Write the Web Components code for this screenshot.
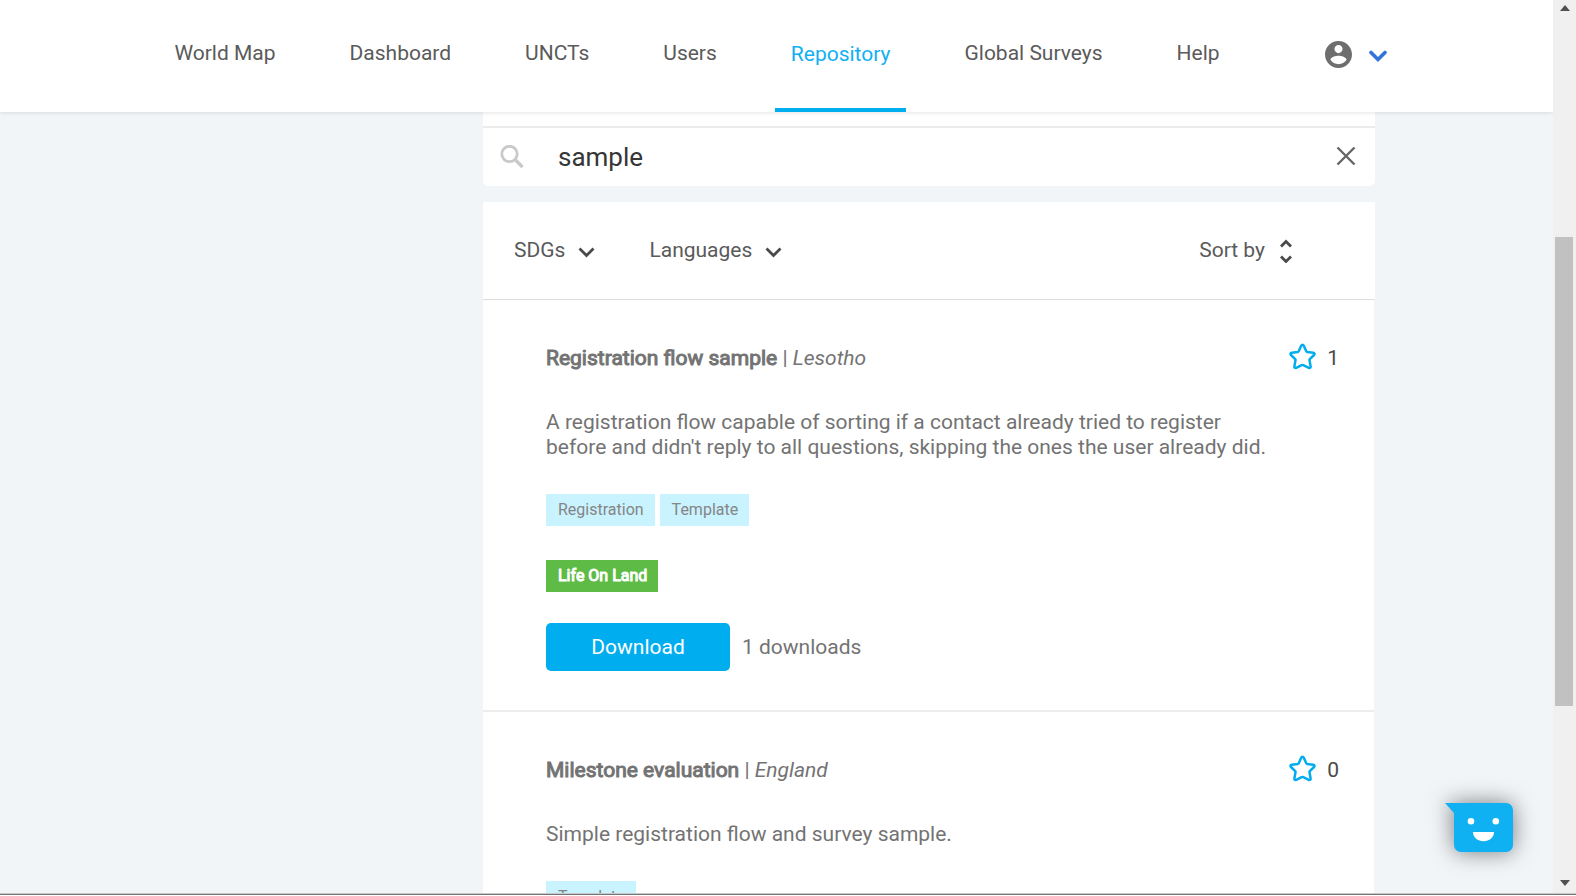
<!DOCTYPE html>
<html lang="en">
<head>
<meta charset="utf-8">
<title>Repository</title>
<style>
  html, body { margin: 0; height: 100%; }
  body { font-family: Roboto, "Liberation Sans", sans-serif; font-size: 21px; line-height: 25px; color: #737373; background: #fff; overflow: hidden; }
</style>
</head>
<body>
<repo-app></repo-app>
<script>
const define = (name, html) => {
  const t = document.createElement('template');
  t.innerHTML = html;
  customElements.define(name, class extends HTMLElement {
    constructor() {
      super();
      this.attachShadow({ mode: 'open' }).append(t.content.cloneNode(true));
    }
  });
};

define('nav-item', `
<style>
  :host { display: flex; }
  a { display: flex; align-items: center; box-sizing: border-box; padding: 0 16px 6px; color: #5a5a5a; text-decoration: none; }
  :host([active]) a { color: #11b0f2; padding-top: 6px; border-bottom: 4px solid #00adef; }
</style>
<a href="#"><slot></slot></a>`);

define('site-header', `
<style>
  :host { display: block; flex: none; background: #fff; box-shadow: 0 1px 4px rgba(0,0,0,.1); position: relative; z-index: 1; }
  nav { display: flex; justify-content: center; gap: 42px; height: 112px; }
  button { display: flex; align-items: center; gap: 17px; margin-left: 47px; padding: 0 8px 4px 0; border: 0; background: none; }
  svg { display: block; }
</style>
<nav>
  <nav-item>World Map</nav-item>
  <nav-item>Dashboard</nav-item>
  <nav-item>UNCTs</nav-item>
  <nav-item>Users</nav-item>
  <nav-item active>Repository</nav-item>
  <nav-item>Global Surveys</nav-item>
  <nav-item>Help</nav-item>
  <button type="button" aria-label="Account">
    <svg width="27" height="27" viewBox="2 2 20 20"><path fill="#6e6e6e" d="M12 2C6.48 2 2 6.48 2 12s4.48 10 10 10 10-4.48 10-10S17.52 2 12 2zm0 3c1.66 0 3 1.34 3 3s-1.34 3-3 3-3-1.34-3-3 1.34-3 3-3zm0 14.200c-2.500 0-4.710-1.280-6-3.220.03-1.990 4-3.080 6-3.080 1.990 0 5.970 1.090 6 3.080-1.290 1.940-3.500 3.220-6 3.220z"/></svg>
    <svg width="18" height="18" viewBox="0 0 18 18"><path d="M2 7.500l7 7 7-7" fill="none" stroke="#3273dc" stroke-width="3.600" stroke-linecap="round"/></svg>
  </button>
</nav>`);

define('search-box', `
<style>
  :host { display: block; background: #fff; border-radius: 0 0 5px 5px; padding-top: 14px; }
  form { display: flex; align-items: center; gap: 33px; height: 58px; padding: 0 19px 0 17px; border-top: 2px solid #ebebeb; }
  input { flex: 1; min-width: 0; border: 0; padding: 0; outline: 0; background: none; font: inherit; font-size: 26px; line-height: 32px; color: #363636; }
  button { border: 0; padding: 0; background: none; }
  svg { display: block; }
</style>
<form>
  <svg width="25" height="25" viewBox="0 0 25 25" fill="none" stroke="#c9c9c9"><circle cx="9.500" cy="9" r="7.700" stroke-width="2.800"/><path d="M15 14.500l7.500 7.500" stroke-width="3.400"/></svg>
  <input type="text" value="sample" aria-label="Search">
  <button type="button" aria-label="Clear"><svg width="20" height="24" viewBox="0 0 20 24"><path d="M1.500 2.500l17 17M18.500 2.500l-17 17" fill="none" stroke="#666" stroke-width="2.400"/></svg></button>
</form>`);

define('filter-bar', `
<style>
  :host { display: flex; align-items: center; height: 97px; padding: 0 82px 0 31px; background: #fff; border-bottom: 1px solid #dedede; }
  button { display: flex; align-items: center; gap: 13px; border: 0; padding: 0; margin-right: 54px; background: none; font: inherit; color: #5a5a5a; }
  button.sort { gap: 14px; margin: 0 0 0 auto; }
  svg { display: block; fill: none; stroke: #4a4a4a; stroke-width: 2.800; }
</style>
<button type="button">SDGs <svg width="17" height="18" viewBox="0 0 17 18"><path d="M1.500 6.500l7 7 7-7"/></svg></button>
<button type="button">Languages <svg width="17" height="18" viewBox="0 0 17 18"><path d="M1.500 6.500l7 7 7-7"/></svg></button>
<button type="button" class="sort">Sort by <svg width="14" height="24" viewBox="0 0 14 24"><path d="M2 7.500l5-5 5 5M2 17.500l5 5 5-5"/></svg></button>`);

define('tag-chip', `
<style>
  :host { display: block; padding: 4px 11px 4px 12px; font-size: 16px; line-height: 24px; background: #c9f3ff; color: #858585; }
  :host([goal]) { background: #5dbb46; color: #fff; -webkit-text-stroke: 1px #fff; }
</style>
<slot></slot>`);

define('flow-card', `
<style>
  :host { display: block; margin-right: 1px; padding: 46px 35px 39px 63px; background: #fff; border-bottom: 2px solid #ededed; }
  header { display: flex; justify-content: space-between; align-items: center; height: 25px; }
  h2 { margin: 0; font-size: inherit; font-weight: 400; }
  b { font-weight: 400; -webkit-text-stroke: 1px #737373; }
  .star { display: flex; align-items: center; gap: 11px; border: 0; padding: 0; background: none; font: inherit; color: #4a4a4a; }
  .star svg { display: block; margin-bottom: 4px; }
  p { margin: 39px 60px 34px 0; }
  .row { display: flex; gap: 5px; margin-bottom: 34px; }
  .goal { margin-bottom: 31px; }
  footer { display: flex; align-items: center; gap: 12px; }
  .dl { width: 184px; height: 48px; border: 0; border-radius: 5px; background: #00adef; color: #fff; font: inherit; }
</style>
<header>
  <h2><b><slot name="title"></slot></b> | <i><slot name="place"></slot></i></h2>
  <button class="star" type="button"><svg width="27" height="27" viewBox="0 0 27 27"><path d="M13.500 1.700c.6 0 1 .4 1.300 1l2.500 5.600c.2.400.5.600.9.700l6 .8c1.400.2 1.700 1.300.8 2.200l-4.200 4.100c-.3.300-.4.700-.3 1.100l1.100 6.200c.2 1.400-.7 2-1.800 1.400l-5.500-2.600c-.5-.2-1.100-.2-1.600 0l-5.500 2.600c-1.100.6-2 0-1.800-1.400l1.100-6.200c.1-.4 0-.8-.3-1.100L2 12c-.9-.9-.6-2 .8-2.200l6-.8c.4-.1.7-.3.900-.7l2.500-5.600c.3-.6.700-1 1.300-1z" fill="none" stroke="#00adef" stroke-width="2.500" stroke-linejoin="round"/></svg><slot name="stars"></slot></button>
</header>
<p><slot name="text"></slot></p>
<div class="row"><slot name="tag"></slot></div>
<div class="row goal"><slot name="goal"></slot></div>
<footer><button class="dl" type="button">Download</button><slot name="count"></slot></footer>`);

define('chat-launcher', `
<style>
  :host { position: absolute; right: 40px; bottom: 41px; }
  button { display: block; border: 0; padding: 0; background: none; }
  svg { display: block; overflow: visible; filter: drop-shadow(0 0 11px rgba(0,0,0,.5)); }
</style>
<button type="button" aria-label="Open chat"><svg width="68" height="49" viewBox="0 0 68 49">
  <path fill="#0fb1f2" d="M0 0h61a7 7 0 0 1 7 7v35a7 7 0 0 1-7 7H16a7 7 0 0 1-7-7V10z"/>
  <g fill="#fff"><circle cx="26" cy="18.300" r="3.300"/><circle cx="50.800" cy="18.300" r="3.300"/><path d="M28 29h21c0 5.500-4.700 9.300-10.500 9.300S28 34.500 28 29z"/></g>
</svg></button>`);

define('scroll-rail', `
<style>
  :host { display: flex; flex-direction: column; align-items: center; flex: none; width: 23px; background: #f0f0f0; }
  svg { display: block; flex: none; fill: #505050; }
  .track { flex: 1; align-self: stretch; display: grid; grid-template-rows: 219fr 469fr 169fr; padding: 0 3px 0 2px; }
  .thumb { grid-row: 2; background: #c1c1c1; }
</style>
<svg width="10" height="18" viewBox="0 0 10 18"><path d="M0 11l5-6 5 6z"/></svg>
<div class="track"><div class="thumb"></div></div>
<svg width="10" height="18" viewBox="0 0 10 18"><path d="M0 5l5 6 5-6z"/></svg>`);

define('repo-app', `
<style>
  :host { display: flex; height: 100vh; box-sizing: border-box; border-bottom: 1px solid #fff; }
  .frame { flex: 1; display: flex; min-width: 0; padding-bottom: 1px; background: #c8c8c8; border-bottom: 1px solid #757575; }
  .view { flex: 1; min-width: 0; display: flex; flex-direction: column; position: relative; overflow: hidden; background: #f1f5f8; }
  main { flex: 1; min-height: 0; overflow: hidden; width: 100%; max-width: 1197px; margin: 0 auto; display: grid; grid-template-columns: 305px 1fr; }
  section { grid-column: 2; }
  filter-bar { margin-top: 16px; }
</style>
<div class="frame">
  <div class="view">
    <site-header></site-header>
    <main>
      <section>
        <search-box></search-box>
        <filter-bar></filter-bar>
        <flow-card>
          <span slot="title">Registration flow sample</span><span slot="place">Lesotho</span><span slot="stars">1</span>
          <span slot="text">A registration flow capable of sorting if a contact already tried to register before and didn't reply to all questions, skipping the ones the user already did.</span>
          <tag-chip slot="tag">Registration</tag-chip><tag-chip slot="tag">Template</tag-chip>
          <tag-chip slot="goal" goal>Life On Land</tag-chip>
          <span slot="count">1 downloads</span>
        </flow-card>
        <flow-card>
          <span slot="title">Milestone evaluation</span><span slot="place">England</span><span slot="stars">0</span>
          <span slot="text">Simple registration flow and survey sample.</span>
          <tag-chip slot="tag">Template</tag-chip>
        </flow-card>
      </section>
    </main>
    <chat-launcher></chat-launcher>
  </div>
  <scroll-rail></scroll-rail>
</div>`);
</script>
</body>
</html>
